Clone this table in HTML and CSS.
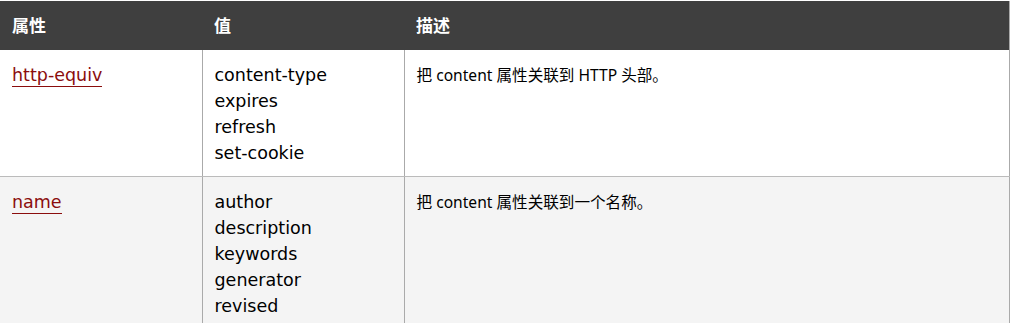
FILE: index.html
```html
<!DOCTYPE html>
<html lang="zh-CN">
<head>
    <meta charset="UTF-8">
    <title>meta 属性</title>
    <link rel="stylesheet" href="styles.css">
</head>
<body>
    <table class="ref-table">
        <tr>
            <th class="col-attr">属性</th>
            <th class="col-value">值</th>
            <th>描述</th>
        </tr>
        <tr>
            <td><a href="#http-equiv">http-equiv</a></td>
            <td>content-type<br>expires<br>refresh<br>set-cookie</td>
            <td class="desc">把 content 属性关联到 HTTP 头部。</td>
        </tr>
        <tr class="alt">
            <td><a href="#name">name</a></td>
            <td>author<br>description<br>keywords<br>generator<br>revised</td>
            <td class="desc">把 content 属性关联到一个名称。</td>
        </tr>
    </table>
</body>
</html>
```

FILE: styles.css
```css
body { margin: 0; padding-top: 1px; font-family: "DejaVu Sans", "Noto Sans CJK SC", sans-serif; color: #000; background: #fff; }
.ref-table { width: 1010px; border-collapse: collapse; border-right: 1px solid #aaa; }
.ref-table th { background: #3f3f3f; color: #fff; text-align: left; font-family: "Noto Sans", "Noto Sans CJK SC", sans-serif; font-size: 17px; font-weight: bold; height: 49px; padding: 0 12px; line-height: 26px; }
.ref-table td { vertical-align: top; padding: 12px 12px 10px; font-size: 17.5px; line-height: 26px; border-bottom: 1px solid #bbb; border-left: 1px solid #aaa; }
.ref-table td:first-child { border-left: none; }
.ref-table td.desc { font-family: "Noto Sans", "Noto Sans CJK SC", sans-serif; font-size: 15.6px; }
.col-attr { width: 178px; }
.col-value { width: 178px; }
.alt td { background: #f4f4f4; }
.ref-table a { color: #8b0d0d; text-decoration: none; border-bottom: 1px solid #8b0d0d; padding-bottom: 1px; }
```
